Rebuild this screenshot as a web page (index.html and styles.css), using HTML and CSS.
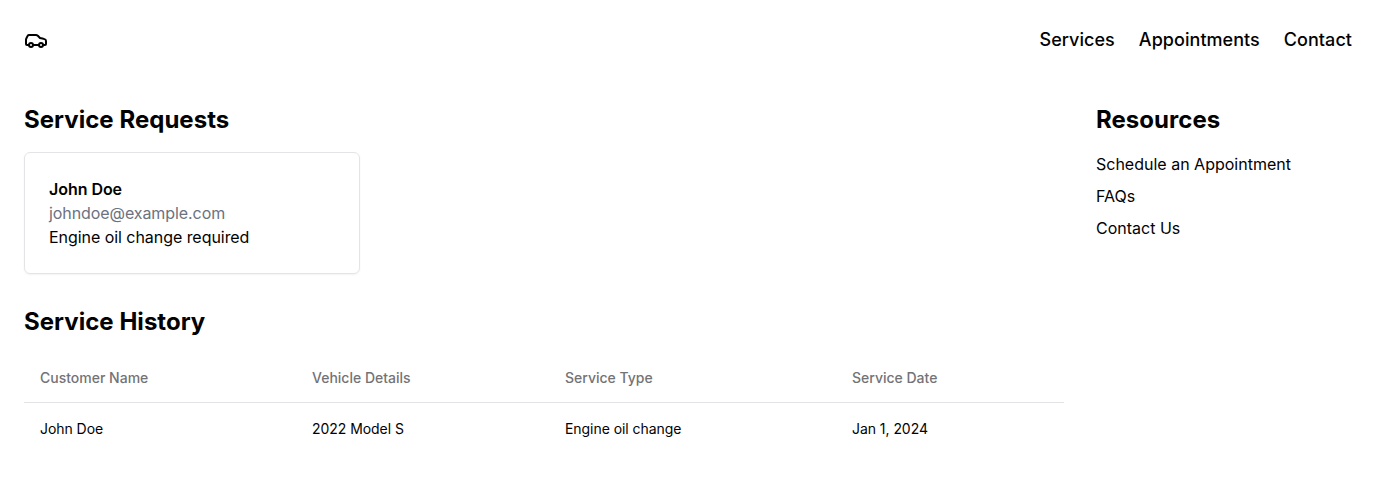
FILE: index.html
```html
<!DOCTYPE html>
<html lang="en">
<head>
<meta charset="utf-8">
<title>Service Dashboard</title>
<link rel="stylesheet" href="styles.css">
</head>
<body>
<header class="header">
  <a class="logo" aria-label="Home">
    <svg class="logo-icon" viewBox="0 0 24 24" fill="none" stroke="currentColor" stroke-width="2" stroke-linecap="round" stroke-linejoin="round">
      <path d="M19 17h2c.6 0 1-.4 1-1v-3c0-.9-.7-1.7-1.5-1.9C18.7 10.6 16 10 16 10s-1.3-1.4-2.2-2.3c-.5-.4-1.1-.7-1.8-.7H5c-.6 0-1.1.4-1.4.9l-1.4 2.9A3.7 3.7 0 0 0 2 12v4c0 .6.4 1 1 1h2"/>
      <circle cx="7" cy="17" r="2"/>
      <path d="M9 17h6"/>
      <circle cx="17" cy="17" r="2"/>
    </svg>
  </a>
  <nav class="nav">
    <a>Services</a>
    <a>Appointments</a>
    <a>Contact</a>
  </nav>
</header>
<main class="main">
  <div class="content">
    <section>
      <h2 class="heading">Service Requests</h2>
      <div class="requests">
        <article class="card">
          <h3 class="card-name">John Doe</h3>
          <p class="card-email">johndoe@example.com</p>
          <p>Engine oil change required</p>
        </article>
      </div>
    </section>
    <section class="history">
      <h2 class="heading">Service History</h2>
      <table class="table">
        <colgroup><col class="col-name"><col class="col-vehicle"><col class="col-type"><col></colgroup>
        <thead>
          <tr><th>Customer Name</th><th>Vehicle Details</th><th>Service Type</th><th>Service Date</th></tr>
        </thead>
        <tbody>
          <tr><td>John Doe</td><td>2022 Model S</td><td>Engine oil change</td><td>Jan 1, 2024</td></tr>
        </tbody>
      </table>
    </section>
  </div>
  <aside class="sidebar">
    <h2 class="heading">Resources</h2>
    <ul class="links">
      <li><a>Schedule an Appointment</a></li>
      <li><a>FAQs</a></li>
      <li><a>Contact Us</a></li>
    </ul>
  </aside>
</main>
</body>
</html>
```

FILE: styles.css
```css
* { box-sizing: border-box; margin: 0; padding: 0; }
body { font-family: Inter, sans-serif; font-size: 16px; line-height: 24px; color: #020202; background: #fff; }
.header { display: flex; align-items: center; justify-content: space-between; height: 80px; padding: 0 24px; }
.logo { display: flex; }
.logo-icon { width: 24px; height: 24px; }
.nav { display: flex; gap: 24px; font-size: 18px; line-height: 28px; font-weight: 500; letter-spacing: 0.045px; }
.main { display: grid; grid-template-columns: 1040px 1fr; gap: 32px; padding: 24px; }
.heading { font-size: 24px; line-height: 32px; font-weight: 700; letter-spacing: 0.03px; margin-bottom: 16px; }
.requests { display: grid; grid-template-columns: repeat(3, 1fr); gap: 16px; }
.card { border: 1px solid #e4e4e7; border-radius: 6px; padding: 24px; box-shadow: 0 1px 2px rgba(0, 0, 0, 0.05); letter-spacing: -0.05px; }
.card-name { font-size: 16px; font-weight: 600; }
.card-email { color: #6b7280; letter-spacing: -0.08px; }
.history { margin-top: 32px; }
.table { width: 100%; table-layout: fixed; border-collapse: collapse; font-size: 14px; line-height: 20px; }
.col-name { width: 272px; }
.col-vehicle { width: 253px; }
.col-type { width: 287px; }
.table th { height: 48px; padding: 0 16px; text-align: left; font-weight: 500; color: #737376; }
.table thead tr { border-bottom: 1px solid #e4e4e7; }
.table td { padding: 16px; letter-spacing: -0.05px; }
.links { list-style: none; display: grid; gap: 8px; }
```
